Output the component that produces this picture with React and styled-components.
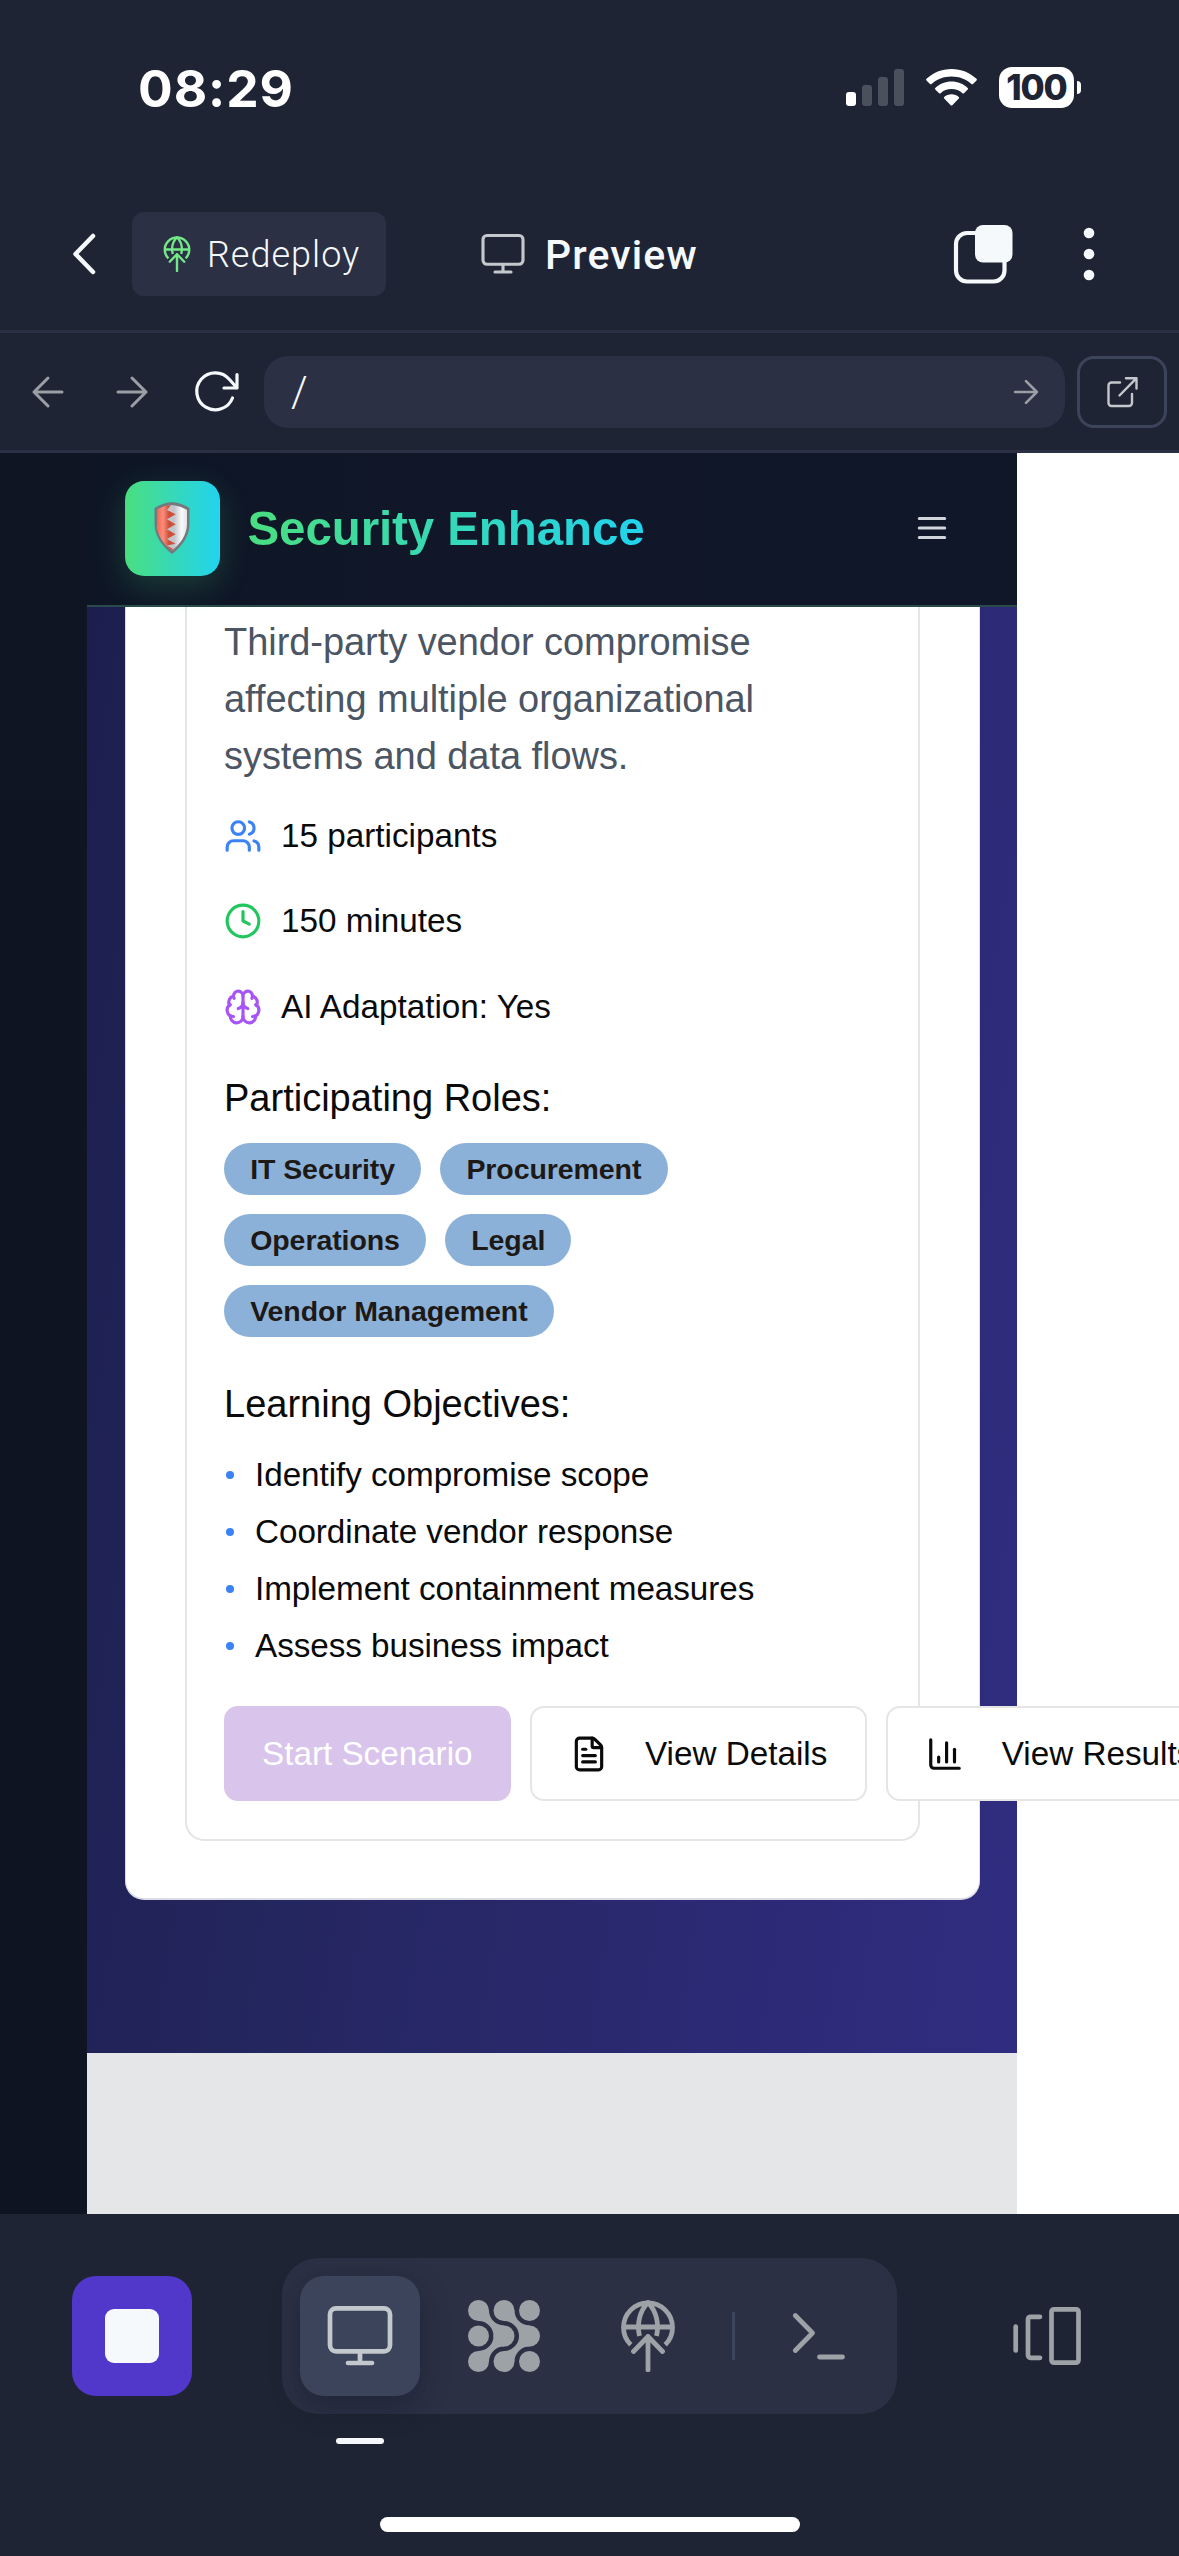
import React from "react";
import styled, { createGlobalStyle, css } from "styled-components";
import { Users, Clock, Brain, FileText, ChartColumn } from "lucide-react";

const ink = "#1e2433";
const raised = "#2b3044";
const outline = "#3c445c";
const bright = "#f5f9fc";
const soft = "#c2c8cc";
const muted = "#9da2a6";

const GlobalStyle = createGlobalStyle`
  * { box-sizing: border-box; }
  body { margin: 0; background: ${ink}; }
  svg { display: block; flex: none; }
  h1, h2, p, ul { margin: 0; padding: 0; font-weight: 400; }
  button { border: 0; margin: 0; padding: 0; background: none; font: inherit; color: inherit; }
`;

const Screen = styled.div`
  width: 1179px;
  height: 2556px;
  display: flex;
  flex-direction: column;
  overflow: hidden;
  background: ${ink};
  font-family: Roboto, "Noto Sans", sans-serif;
`;

/* ---------- status bar ---------- */
const StatusBar = styled.header`
  height: 177px;
  flex: none;
  display: flex;
  justify-content: space-between;
  padding: 67px 98px 0 138px;
`;
const Time = styled.div`
  font: 700 51.5px/42px Inter, sans-serif;
  letter-spacing: 0.9px;
  color: #fff;
`;
const StatusIcons = styled.div`
  display: flex;
  height: 41px;
  align-items: center;
`;
const Signal = styled.svg`margin-right: 22px;`;
const Wifi = styled.svg`margin-right: 22px;`;
const Battery = styled.div`
  width: 75px;
  height: 41px;
  border-radius: 13px;
  background: #fff;
  color: ${ink};
  text-align: center;
  font: 800 35px/41px Inter, sans-serif;
  letter-spacing: -1.2px;
`;
const BatteryTip = styled.div`
  width: 4px;
  height: 13px;
  margin-left: 3px;
  border-radius: 0 4px 4px 0;
  background: #fff;
`;

/* ---------- app toolbar ---------- */
const Toolbar = styled.nav`
  height: 156px;
  flex: none;
  display: flex;
  align-items: center;
  padding: 0 84px 0 71px;
  border-bottom: 3px solid ${raised};
`;
const RedeployButton = styled.button`
  display: flex;
  align-items: center;
  width: 254px;
  height: 84px;
  margin-left: 35px;
  padding-left: 27px;
  gap: 12px;
  border-radius: 12px;
  background: ${raised};
  color: ${bright};
  font-size: 36px;
  font-weight: 300;
  line-height: 84px;
  letter-spacing: 1px;
`;
const ScreenTitle = styled.div`
  display: flex;
  align-items: center;
  margin-left: 93px;
  gap: 18px;
  color: ${bright};
  font-size: 41px;
  font-weight: 500;
  line-height: 60px;
  letter-spacing: 1.1px;
`;
const Label = styled.span`
  padding-top: 2px;
`;
const ToolbarActions = styled.div`
  display: flex;
  align-items: center;
  gap: 70px;
  margin-left: auto;
`;

/* ---------- address bar ---------- */
const AddressRow = styled.div`
  height: 120px;
  flex: none;
  display: flex;
  align-items: center;
  padding: 0 12px 0 30px;
  border-bottom: 3px solid ${raised};
`;
const NavIcons = styled.div`
  display: flex;
  align-items: center;
  width: 234px;
  gap: 48px;
  svg:last-child { margin-left: -5px; }
`;
const Address = styled.div`
  flex: 1;
  height: 72px;
  display: flex;
  align-items: center;
  justify-content: space-between;
  padding: 0 25px 0 27px;
  border-radius: 24px;
  background: ${raised};
  color: ${bright};
  font-size: 42px;
  font-weight: 300;
`;
const OpenButton = styled.button`
  width: 90px;
  height: 72px;
  margin-left: 12px;
  display: flex;
  align-items: center;
  justify-content: center;
  border: 3px solid ${outline};
  border-radius: 17px;
`;

/* ---------- previewed site ---------- */
const Viewport = styled.main`
  height: 1761px;
  flex: none;
  display: flex;
  overflow: hidden;
  background: #fff;
  font-family: "Liberation Sans", Arial, sans-serif;
`;
const Gutter = styled.div`
  width: 87px;
  flex: none;
  background: linear-gradient(#0f1523, #0e1422);
`;
const Site = styled.div`
  width: 930.4px;
  flex: none;
  display: flex;
  flex-direction: column;
  background: #e5e6e8;
`;
const SiteHeader = styled.div`
  height: 154px;
  flex: none;
  z-index: 1;
  display: flex;
  align-items: center;
  padding: 0 66px 2px 37.5px;
  border-bottom: 2.4px solid #2a4a4b;
  background: linear-gradient(90deg, #0e1626, #111728 50%, #0f1728);
`;
const Logo = styled.div`
  width: 95px;
  height: 95px;
  display: flex;
  align-items: center;
  justify-content: center;
  border: 1.6px solid transparent;
  border-radius: 19px;
  background: linear-gradient(90deg, #4ade80, #22d3ee);
  box-shadow: 0 10px 32px rgba(74, 222, 128, 0.2);
`;
const SiteName = styled.h1`
  margin-left: 28px;
  padding-top: 2px;
  font-size: 47.5px;
  font-weight: 700;
  line-height: 66px;
  letter-spacing: -0.1px;
  background: linear-gradient(90deg, #4ade80, #22d3ee);
  background-clip: text;
  color: transparent;
`;
const MenuButton = styled.button`
  margin-left: auto;
`;
const Section = styled.section`
  height: 1446px;
  flex: none;
  padding: 0 37.5px;
  background: linear-gradient(99deg, #1c1f4e 0%, #24265f 35%, #2c2a75 75%, #302d81 100%);
`;
const Panel = styled.div`
  height: 1293px;
  padding: 0 59px 59px;
  border: solid #dcdce4;
  border-width: 0 1px 2px;
  border-radius: 0 0 19px 19px;
  background: #fff;
`;
const Scenario = styled.article`
  height: 1234px;
  padding: 6.5px 37.5px 0;
  border: 2.4px solid #e5e5e5;
  border-top: 0;
  border-radius: 0 0 19px 19px;
`;
const Summary = styled.p`
  width: 600px;
  font-size: 38px;
  line-height: 57px;
  letter-spacing: -0.05px;
  color: #4b5563;
`;
const Facts = styled.ul`
  display: flex;
  flex-direction: column;
  gap: 38px;
  margin-top: 27.5px;
  list-style: none;
`;
const Fact = styled.li`
  display: flex;
  align-items: center;
  height: 47.5px;
  gap: 19px;
  font-size: 33.26px;
  color: #0a0a0a;
  svg { color: ${(p) => p.$tint}; }
`;
const Heading = styled.h2`
  margin-top: 39px;
  font-size: 38px;
  line-height: 57px;
  color: #0a0a0a;
`;
const Roles = styled.div`
  display: flex;
  flex-wrap: wrap;
  width: 500px;
  gap: 19px;
  margin-top: 16px;
`;
const Role = styled.span`
  height: 52.3px;
  padding: 0 26.2px;
  border-radius: 27px;
  background: #8cb1d9;
  color: #1c1917;
  font-size: 28.5px;
  font-weight: 700;
  line-height: 52px;
  letter-spacing: -0.08px;
`;
const Objectives = styled.ul`
  margin-top: 12.5px;
  list-style: none;
`;
const Objective = styled.li`
  display: flex;
  align-items: center;
  height: 57px;
  font-size: 33.26px;
  line-height: 57px;
  letter-spacing: -0.05px;
  color: #0a0a0a;
  &::before {
    content: "";
    width: 8px;
    height: 8px;
    margin: 1px 21px 0 2px;
    border-radius: 50%;
    background: #3b82f6;
  }
`;
const Actions = styled.div`
  display: flex;
  gap: 19px;
  margin-top: 32.5px;
`;
const Action = styled.button`
  flex: none;
  display: flex;
  align-items: center;
  height: 95px;
  gap: 37.5px;
  padding: 0 38px;
  border-radius: 14px;
  font-size: 33.26px;
  letter-spacing: -0.01px;
  white-space: nowrap;
  ${(p) =>
    p.$primary
      ? css`
          background: #d9c4eb;
          color: #fff;
        `
      : css`
          border: 2.4px solid #e5e5e5;
          background: #fff;
          color: #0a0a0a;
        `}
`;

/* ---------- bottom bar ---------- */
const BottomBar = styled.footer`
  flex: 1;
  display: flex;
  flex-direction: column;
  padding-top: 44px;
`;
const Dock = styled.div`
  display: flex;
  align-items: center;
  justify-content: space-between;
  height: 156px;
  padding: 0 72px;
`;
const StopButton = styled.button`
  width: 120px;
  height: 120px;
  display: flex;
  align-items: center;
  justify-content: center;
  border-radius: 24px;
  background: #5138cb;
`;
const StopGlyph = styled.span`
  width: 54px;
  height: 54px;
  border-radius: 9px;
  background: ${bright};
`;
const Tabs = styled.div`
  display: flex;
  align-items: center;
  height: 156px;
  padding: 18px;
  gap: 24px;
  border-radius: 36px;
  background: ${raised};
`;
const Tab = styled.button`
  width: 120px;
  height: 120px;
  display: flex;
  align-items: center;
  justify-content: center;
  border-radius: 24px;
  ${(p) =>
    p.$active &&
    css`
      background: ${outline};
      box-shadow: 0 10px 28px rgba(16, 18, 34, 0.35);
    `}
`;
const TabDivider = styled.div`
  width: 3px;
  height: 48px;
  background: ${outline};
`;
const ActiveMark = styled.div`
  width: 48px;
  height: 6px;
  margin: 24px 0 0 336px;
  border-radius: 3px;
  background: ${bright};
`;
const HomeIndicator = styled.div`
  width: 420px;
  height: 15px;
  margin: 73px auto 0;
  border-radius: 8px;
  background: #fff;
`;

const stroke = (color, width) => ({
  fill: "none",
  stroke: color,
  strokeWidth: width,
  strokeLinecap: "round",
  strokeLinejoin: "round",
});

const SignalIcon = () => (
  <Signal width="58" height="37" viewBox="0 0 58 37">
    <rect x="0" y="23" width="10" height="14" rx="3" fill="#fff" />
    <rect x="16" y="16" width="10" height="21" rx="3" fill="#4b505d" />
    <rect x="32" y="8" width="10" height="29" rx="3" fill="#4b505d" />
    <rect x="48" y="0" width="10" height="37" rx="3" fill="#4b505d" />
  </Signal>
);

const WifiIcon = () => (
  <Wifi width="51" height="37" viewBox="0 0 51 37" fill="#fff">
    <path d="M25.5 0C35.200 0 43.900 3.700 50.500 9.800Q51.300 10.600 50.500 11.400L47 15Q46.200 15.700 45.400 15C40.200 10.200 33.200 7.500 25.500 7.500S10.800 10.200 5.600 15Q4.800 15.700 4 15L.5 11.400Q-.3 10.600.5 9.800C7.100 3.700 15.800 0 25.500 0Z" />
    <path d="M25.500 12.600C31.700 12.600 37.400 15 41.700 18.900Q42.500 19.700 41.700 20.500L38 24.200Q37.200 24.900 36.400 24.200C33.500 21.600 29.700 20.100 25.500 20.100S17.500 21.600 14.600 24.200Q13.800 24.900 13 24.200L9.300 20.500Q8.500 19.700 9.300 18.900C13.600 15 19.300 12.600 25.500 12.600Z" />
    <path d="M25.500 25.200C28.300 25.200 30.800 26.200 32.800 27.900Q33.600 28.700 32.800 29.500L26.300 36.200Q25.500 37 24.700 36.200L18.200 29.500Q17.400 28.700 18.200 27.900C20.200 26.200 22.700 25.200 25.500 25.200Z" />
  </Wifi>
);

const BackIcon = () => (
  <svg width="26" height="42" viewBox="0 0 26 42" {...stroke(bright, 4.5)}>
    <path d="M22 3 4.500 21 22 39" />
  </svg>
);

const DeployIcon = ({ size, color }) => (
  <svg width={size} height={size} viewBox="0 0 72 72" {...stroke(color, 4.8)}>
    <path strokeLinecap="butt" d="M18.800 44.800A24.500 24.500 0 1 1 53.200 44.800M11.500 27H60.500" />
    <path strokeLinecap="butt" d="M27.500 36C24.700 24.500 27.500 11 36 2.500C44.500 11 47.300 24.500 44.500 36" />
    <path d="M36 70V36.500M21.500 51.500 36 36.500 50.500 51.500" />
  </svg>
);

const MonitorIcon = ({ size, color }) => (
  <svg width={size} height={size} viewBox="0 0 72 72" {...stroke(color, 4.7)}>
    <rect x="6" y="8.300" width="60" height="43" rx="6" />
    <path d="M36 51.500V63M24 63H48" />
  </svg>
);

const StackIcon = () => (
  <svg width="60" height="60" viewBox="0 0 60 60">
    <rect x="3" y="9" width="48.500" height="48.500" rx="11" {...stroke(bright, 4.2)} />
    <rect x="22" y="1" width="37.500" height="37.500" rx="8" fill={bright} />
  </svg>
);

const DotsIcon = () => (
  <svg width="12" height="54" viewBox="0 0 12 54" fill={bright}>
    <circle cx="6" cy="6" r="5.300" />
    <circle cx="6" cy="27" r="5.300" />
    <circle cx="6" cy="48" r="5.300" />
  </svg>
);

const ArrowIcon = ({ size, left, width = 3 }) => (
  <svg width={size} height={size} viewBox="0 0 36 36" {...stroke("#9a9ea5", (width * 36) / size)}>
    <path d={left ? "M32 18H4M18 4 4 18 18 32" : "M4 18H32M18 4 32 18 18 32"} />
  </svg>
);

const ReloadIcon = () => (
  <svg width="48" height="48" viewBox="0 0 48 48" {...stroke(bright, 3.2)}>
    <path d="M39.500 30A18.500 18.500 0 1 1 36.500 11.500L44 20M44 6.500V20H31" />
  </svg>
);

const OpenIcon = () => (
  <svg width="36" height="36" viewBox="0 0 36 36" {...stroke(soft, 2.4)}>
    <path d="M16 8.500H7.500A3 3 0 0 0 4.500 11.500V29A3 3 0 0 0 7.500 32H25A3 3 0 0 0 28 29V20M22 4.200H32.500V14.500M32.500 4.200 15.500 21.500" />
  </svg>
);

const MenuIcon = () => (
  <svg width="38" height="38" viewBox="0 0 24 24" {...stroke("#d1d5db", 2)}>
    <path d="M4 6H20M4 12H20M4 18H20" />
  </svg>
);

const AgentIcon = () => (
  <svg width="72" height="72" viewBox="0 0 72 72" fill={muted}>
    {[10.5, 36, 61.5].map((x) =>
      [10.5, 36, 61.5].map((y) => <circle key={`${x}-${y}`} cx={x} cy={y} r="10.500" />)
    )}
    {[0, 25.5].map((dx) => (
      <path
        key={dx}
        transform={`translate(${dx} 0)`}
        d="M10.500 21A15 15 0 0 1 25.500 36H36V25.500A15 15 0 0 1 21 10.500H10.500ZM10.500 51A15 15 0 0 0 25.500 36H36V46.500A15 15 0 0 0 21 61.500H10.500Z"
      />
    ))}
  </svg>
);

const ShellIcon = () => (
  <svg width="72" height="72" viewBox="0 0 72 72" {...stroke(muted, 4.8)}>
    <path d="M12.300 15.500 29.500 33 12.300 50.500M36.500 57H59.500" />
  </svg>
);

const LayoutIcon = () => (
  <svg width="72" height="72" viewBox="0 0 72 72" {...stroke(muted, 4.7)}>
    <path d="M4.700 26.500V50.500M29 16.800H19.500A2.500 2.500 0 0 0 17 19.300V55.300A2.500 2.500 0 0 0 19.500 57.800H29" />
    <rect x="40.500" y="9.300" width="27" height="53.400" rx="2.500" />
  </svg>
);

const ShieldIcon = () => (
  <svg width="36" height="52" viewBox="0 0 36 52">
    <defs>
      <linearGradient id="shieldRed" gradientUnits="userSpaceOnUse" x1="2" x2="22" y1="0" y2="0">
        <stop offset="0" stopColor="#e8604a" />
        <stop offset=".35" stopColor="#ff8d7b" />
        <stop offset=".65" stopColor="#c9503a" />
        <stop offset="1" stopColor="#d5523a" />
      </linearGradient>
      <linearGradient id="shieldSilver" gradientUnits="userSpaceOnUse" x1="13" x2="34" y1="0" y2="0">
        <stop offset="0" stopColor="#c3c6cb" />
        <stop offset=".35" stopColor="#c3c5cc" />
        <stop offset=".7" stopColor="#fafafc" />
        <stop offset="1" stopColor="#dcdee2" />
      </linearGradient>
    </defs>
    <path d="M18 0Q28 1 35.500 6V22C35.500 35 27 45 18 52C9 45 .5 35 .5 22V6Q8 1 18 0Z" fill="#74797c" />
    <path d="M18 3Q27 4 33 8V22C33 33 26 42 18 48.500C10 42 3 33 3 22V8Q9 4 18 3Z" fill="url(#shieldSilver)" />
    <path d="M17 3.200Q9 4 3 8V22C3 33 10 42 18 48.500L19 47 13 43.500 21.500 41.700 13 37 21.700 32.300 13 27.300 21.700 22.300 13 17.300 21.700 12.300 13 8Z" fill="url(#shieldRed)" />
  </svg>
);

const facts = [
  { icon: Users, tint: "#3b82f6", label: "15 participants" },
  { icon: Clock, tint: "#22c55e", label: "150 minutes" },
  { icon: Brain, tint: "#a855f7", label: "AI Adaptation: Yes" },
];
const roles = ["IT Security", "Procurement", "Operations", "Legal", "Vendor Management"];
const objectives = [
  "Identify compromise scope",
  "Coordinate vendor response",
  "Implement containment measures",
  "Assess business impact",
];

export default function App() {
  return (
    <Screen>
      <GlobalStyle />
      <StatusBar>
        <Time>08:29</Time>
        <StatusIcons>
          <SignalIcon />
          <WifiIcon />
          <Battery>100</Battery>
          <BatteryTip />
        </StatusIcons>
      </StatusBar>

      <Toolbar>
        <BackIcon />
        <RedeployButton>
          <DeployIcon size={36} color="#72e886" />
          <Label>Redeploy</Label>
        </RedeployButton>
        <ScreenTitle>
          <MonitorIcon size={48} color={soft} />
          <Label>Preview</Label>
        </ScreenTitle>
        <ToolbarActions>
          <StackIcon />
          <DotsIcon />
        </ToolbarActions>
      </Toolbar>

      <AddressRow>
        <NavIcons>
          <ArrowIcon size={36} left />
          <ArrowIcon size={36} />
          <ReloadIcon />
        </NavIcons>
        <Address>
          <span>/</span>
          <ArrowIcon size={28} width={2.6} />
        </Address>
        <OpenButton>
          <OpenIcon />
        </OpenButton>
      </AddressRow>

      <Viewport>
        <Gutter />
        <Site>
          <SiteHeader>
            <Logo>
              <ShieldIcon />
            </Logo>
            <SiteName>Security Enhance</SiteName>
            <MenuButton>
              <MenuIcon />
            </MenuButton>
          </SiteHeader>
          <Section>
            <Panel>
              <Scenario>
                <Summary>
                  Third-party vendor compromise affecting multiple organizational systems and data flows.
                </Summary>
                <Facts>
                  {facts.map(({ icon: Icon, tint, label }) => (
                    <Fact key={label} $tint={tint}>
                      <Icon size={38} />
                      {label}
                    </Fact>
                  ))}
                </Facts>
                <Heading>Participating Roles:</Heading>
                <Roles>
                  {roles.map((role) => (
                    <Role key={role}>{role}</Role>
                  ))}
                </Roles>
                <Heading>Learning Objectives:</Heading>
                <Objectives>
                  {objectives.map((text) => (
                    <Objective key={text}>{text}</Objective>
                  ))}
                </Objectives>
                <Actions>
                  <Action $primary>Start Scenario</Action>
                  <Action>
                    <FileText size={38} />
                    View Details
                  </Action>
                  <Action>
                    <ChartColumn size={38} />
                    View Results
                  </Action>
                </Actions>
              </Scenario>
            </Panel>
          </Section>
        </Site>
      </Viewport>

      <BottomBar>
        <Dock>
          <StopButton>
            <StopGlyph />
          </StopButton>
          <Tabs>
            <Tab $active>
              <MonitorIcon size={72} color={soft} />
            </Tab>
            <Tab>
              <AgentIcon />
            </Tab>
            <Tab>
              <DeployIcon size={72} color={muted} />
            </Tab>
            <TabDivider />
            <Tab>
              <ShellIcon />
            </Tab>
          </Tabs>
          <Tab>
            <LayoutIcon />
          </Tab>
        </Dock>
        <ActiveMark />
        <HomeIndicator />
      </BottomBar>
    </Screen>
  );
}
